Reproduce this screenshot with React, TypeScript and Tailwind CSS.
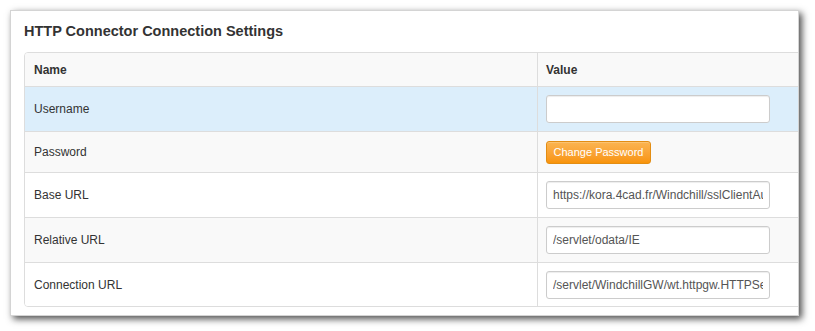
import React from 'react'

const rows = [
  { name: 'Username', kind: 'input', value: '', bg: 'bg-[#dceefb]', h: 'h-[45px]' },
  { name: 'Password', kind: 'button', value: '', bg: 'bg-[#f9f9f9]', h: 'h-[41px]' },
  { name: 'Base URL', kind: 'input', value: 'https://kora.4cad.fr/Windchill/sslClientAuth/servlet', bg: 'bg-white', h: 'h-[45px]' },
  { name: 'Relative URL', kind: 'input', value: '/servlet/odata/IE', bg: 'bg-[#f9f9f9]', h: 'h-[45px]' },
  { name: 'Connection URL', kind: 'input', value: '/servlet/WindchillGW/wt.httpgw.HTTPServer', bg: 'bg-white', h: 'h-[44px]' },
]

export default function App() {
  return (
    <div className="h-[331px] w-[815px] bg-white pl-[10px] pt-[10px] font-['Liberation_Sans',Arial,sans-serif] text-[12px] text-[#333]">

      {/* Panel */}

      <div className="h-[306px] w-[789px] overflow-hidden border border-[#d4d4d4] bg-white px-[13px] shadow-[3px_3px_7px_rgba(0,0,0,0.7)]">

        <div className="flex h-[41px] items-center pt-[1px] text-[14.5px] font-bold text-[#333]">
          HTTP Connector Connection Settings
        </div>

        <div className="w-[820px] overflow-hidden rounded-[4px] border border-[#dddddd]">

          {/* Header */}

          <div className="flex h-[33px] bg-[#f9f9f9] font-bold">
            <div className="flex w-[512px] items-center pl-[9px]">Name</div>
            <div className="flex flex-1 items-center border-l border-[#dddddd] pl-[8px]">Value</div>
          </div>

          {rows.map((row) => (
            <div key={row.name} className={`flex border-t border-[#dddddd] ${row.bg} ${row.h}`}>
              <div className="flex w-[512px] items-center pl-[9px]">{row.name}</div>
              <div className="flex flex-1 items-center border-l border-[#dddddd] pl-[8px]">
                {row.kind === 'input' ? (
                  <input
                    readOnly
                    value={row.value}
                    className="h-[28px] w-[224px] rounded-[3px] border border-[#cccccc] bg-white px-[6px] font-['Liberation_Sans',Arial,sans-serif] text-[12px] text-[#555] shadow-[inset_0_1px_1px_rgba(0,0,0,0.075)] outline-none"
                  />
                ) : (
                  <button className="h-[23px] w-[105px] rounded-[3px] border border-[#e38d13] bg-gradient-to-b from-[#fbb450] to-[#f89406] text-[11px] text-white shadow-[inset_0_1px_0_rgba(255,255,255,0.2)]">
                    Change Password
                  </button>
                )}
              </div>
            </div>
          ))}

        </div>

      </div>

    </div>
  )
}
